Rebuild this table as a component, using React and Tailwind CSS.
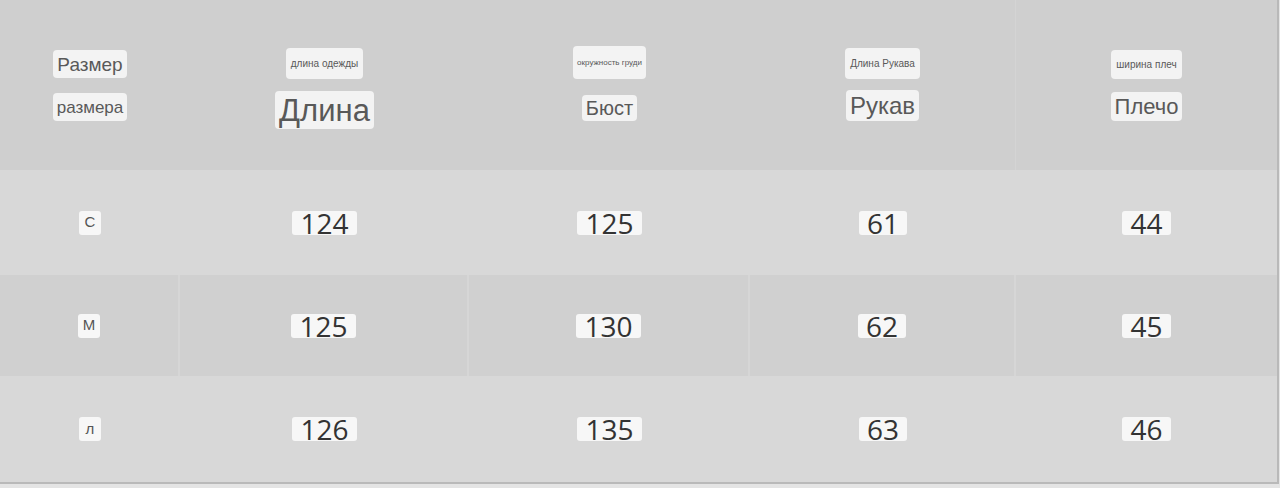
import React from "react";

const cols = "grid grid-cols-[180px_289px_281px_266px_261px]";

const headers = [
  { top: "Размер", topCls: "text-[19px] px-[4px] h-[28px]", bottom: "размера", bottomCls: "text-[17px] px-[4px] h-[28px]", gap: "gap-[15px] pt-[1px]" },
  { top: "длина одежды", topCls: "text-[10px] px-[5px] h-[31px]", bottom: "Длина", bottomCls: "text-[31px] px-[4px] h-[38px]", gap: "gap-[12px] pt-[7px]" },
  { top: "окружность груди", topCls: "text-[8px] px-[4px] h-[33px]", bottom: "Бюст", bottomCls: "text-[20px] px-[4px] h-[26px]", gap: "gap-[16px] pb-[3px]" },
  { top: "Длина Рукава", topCls: "text-[10px] px-[5px] h-[31px]", bottom: "Рукав", bottomCls: "text-[24px] px-[4px] h-[31px]", gap: "gap-[11px] pb-[1px]" },
  { top: "ширина плеч", topCls: "text-[10px] px-[5px] h-[29px]", bottom: "Плечо", bottomCls: "text-[22px] px-[4px] h-[29px]", gap: "gap-[13px] pt-[1px]" },
];

const rows = [
  { size: "С", vals: ["124", "125", "61", "44"], bg: "bg-[#d8d8d8]", h: "h-[105px]", lines: false },
  { size: "М", vals: ["125", "130", "62", "45"], bg: "bg-[#d0d0d0]", h: "h-[101px]", lines: true },
  { size: "л", vals: ["126", "135", "63", "46"], bg: "bg-[#d8d8d8]", h: "h-[106px]", lines: false },
];

function Chip({ children, className }) {
  return (
    <span className={"inline-flex items-center justify-center rounded-[4px] bg-[#f3f3f3] text-[#595959] leading-none " + className}>
      {children}
    </span>
  );
}

export default function App() {
  return (
    <div className="w-[1280px] h-[488px] bg-[#e4e4e4] overflow-hidden" style={{ fontFamily: "'Liberation Sans', Arial, sans-serif" }}>
      <div className="w-[1279px] border-r-2 border-b-2 border-[#b9b9b9]">
        <div className={cols + " h-[170px] bg-[#cfcfcf]"}>
          {headers.map((h, i) => (
            <div key={i} className={"flex flex-col items-center justify-center " + h.gap + (i === 3 ? " border-r border-[#d4d4d4]" : "")}>
              <Chip className={h.topCls}>{h.top}</Chip>
              <Chip className={h.bottomCls}>{h.bottom}</Chip>
            </div>
          ))}
        </div>
        {rows.map((r, ri) => (
          <div key={ri} className={cols + " " + r.bg + " " + r.h}>
            <div className={"flex items-center justify-center" + (r.lines ? " border-r-2 border-[#d6d6d6]" : "")}>
              <span className="inline-flex items-center justify-center w-[22px] h-[24px] rounded-[3px] bg-[#f7f7f7] text-[15px] text-[#555]">
                {r.size}
              </span>
            </div>
            {r.vals.map((v, vi) => (
              <div key={vi} className={"flex items-center justify-center" + (r.lines && vi < 3 ? " border-r-2 border-[#d6d6d6]" : "")}>
                <span
                  className="inline-flex items-center justify-center h-[24px] px-[8px] rounded-[3px] bg-[#f7f7f7] text-[28px] text-[#333] leading-[24px]"
                  style={{ fontFamily: "'Open Sans', 'Noto Sans', sans-serif" }}
                >
                  {v}
                </span>
              </div>
            ))}
          </div>
        ))}
      </div>
    </div>
  );
}
